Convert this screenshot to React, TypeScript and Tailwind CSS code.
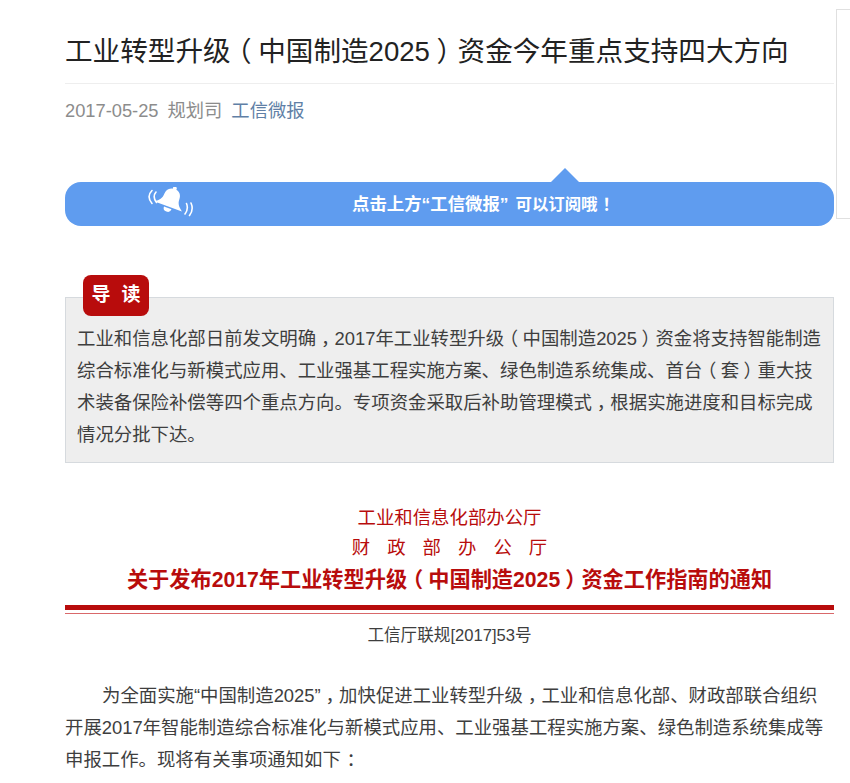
const font = "font-['Liberation_Sans','Noto_Sans_CJK_SC',sans-serif]";

const intro = [
  '工业和信息化部日前发文明确，2017年工业转型升级（中国制造2025）资金将支持智能制造',
  '综合标准化与新模式应用、工业强基工程实施方案、绿色制造系统集成、首台（套）重大技',
  '术装备保险补偿等四个重点方向。专项资金采取后补助管理模式，根据实施进度和目标完成',
  '情况分批下达。',
];

// the source font centres these marks in their em box, Noto pushes them to one side
const markClass: Record<string, string> = {
  '（': 'inline-block -translate-x-[0.24em]',
  '）': 'inline-block translate-x-[0.24em]',
  '，': 'inline-block translate-x-[0.26em]',
  '：': 'inline-block translate-x-[0.3em]',
  '！': 'inline-block translate-x-[0.3em]',
};

function Marks({ text }: { text: string }) {
  return (
    <>
      {text.split(/([（），：！])/).map((part, i) =>
        markClass[part] ? (
          <span key={i} className={markClass[part]}>
            {part}
          </span>
        ) : (
          part
        ),
      )}
    </>
  );
}

function Bell() {
  return (
    <svg width="46" height="34" viewBox="0 0 46 34" fill="none" className="shrink-0">
      <g transform="translate(2.500 -1.500) rotate(20 22 12)">
        <circle cx="22" cy="2.500" r="2" fill="#fff" />
        <path d="M22 3c-5.500 0-8 3.500-8 8 0 5-2.500 7.500-6.500 10.500h29c-4-3-6.500-5.500-6.500-10.500 0-4.500-2.500-8-8-8z" fill="#fff" />
        <path d="M18 23a4 4 0 0 0 8 0z" fill="#fff" />
      </g>
      <path d="M9 5c-2.500 3-2.500 6.500.5 10.500M5 3.500C1 7.500 1.300 12 5 16.500" stroke="#fff" strokeWidth="1.600" strokeLinecap="round" />
      <path d="M39.500 16.500c1.500 3.500 1 7-1.500 10.500M44 16c2 4.500 1.500 8.500-1.500 12.500" stroke="#fff" strokeWidth="1.600" strokeLinecap="round" />
    </svg>
  );
}

export default function App() {
  return (
    <div className={`${font} flex h-[783px] w-[850px] overflow-hidden bg-white`}>
      {/* Article column */}
      <div className="ml-[65px] w-[769px] shrink-0">
        <h1 className="mt-[31px] border-b border-[#eeeeee] pb-[11px] text-[27.600px] leading-[41px] whitespace-nowrap text-[#222222]">
          <Marks text="工业转型升级（中国制造2025）资金今年重点支持四大方向" />
        </h1>
        <div className="mt-[13px] flex h-[28px] items-center gap-[9px] text-[18.300px] whitespace-nowrap text-[#8c8c8c]">
          <span>2017-05-25</span>
          <span>规划司</span>
          <span className="text-[#607fa6]">工信微报</span>
        </div>

        {/* Subscribe banner */}
        <div className="relative mt-[57px] flex h-[44px] items-center rounded-[16px] bg-[#5f9cef] pl-[82px]">
          <div className="absolute -top-[14px] left-[486px] h-0 w-0 border-x-[14px] border-b-[14px] border-x-transparent border-b-[#5f9cef]" />
          <Bell />
          <span className="ml-[159px] text-[17.400px] font-bold whitespace-nowrap text-white">
            点击上方“工信微报”
            <span className="ml-[7px] text-[16.400px]">
              <Marks text="可以订阅哦！" />
            </span>
          </span>
        </div>

        {/* Intro box */}
        <div className="relative mt-[71px] h-[166px] border border-[#d6dade] bg-[#eeeeee] pt-[25px] pl-[11px]">
          <div className="absolute -top-[23px] left-[17px] flex h-[41px] w-[66px] items-center justify-center rounded-[8px] bg-[#b80c0c] text-[19px] font-bold tracking-[11px] whitespace-nowrap text-white">
            <span className="ml-[11px]">导读</span>
          </div>
          {intro.map((line) => (
            <p key={line} className="text-[18.400px] leading-[32px] whitespace-nowrap text-[#3e3e3e]">
              <Marks text={line} />
            </p>
          ))}
        </div>

        {/* Red heading */}
        <div className="mt-[40px] text-center text-[#b80c0c]">
          <p className="text-[18.400px] leading-[30px]">工业和信息化部办公厅</p>
          <p className="pl-[17px] text-[18.400px] leading-[30px] tracking-[17px]">财政部办公厅</p>
          <p className="mt-[2px] text-[21.200px] leading-[30px] font-bold">
            <Marks text="关于发布2017年工业转型升级（中国制造2025）资金工作指南的通知" />
          </p>
        </div>
        <div className="mt-[10px] h-[5px] bg-[#b80c0c]" />
        <div className="mt-[3px] h-px bg-[#d9686a]" />
        <p className="mt-[10px] text-center text-[16.600px] leading-[24px] text-[#3e3e3e]">工信厅联规[2017]53号</p>

        {/* Body */}
        <div className="mt-[32px] text-[18.400px] leading-[32px] whitespace-nowrap text-[#3e3e3e]">
          <p className="pl-[37px]">
            <Marks text="为全面实施“中国制造2025”，加快促进工业转型升级，工业和信息化部、财政部联合组织" />
          </p>
          <p>开展2017年智能制造综合标准化与新模式应用、工业强基工程实施方案、绿色制造系统集成等</p>
          <p>
            <Marks text="申报工作。现将有关事项通知如下：" />
          </p>
        </div>
      </div>

      {/* Sidebar edge */}
      <div className="mt-[9px] ml-[2px] h-[210px] w-[20px] shrink-0 border border-[#e0e0e0] bg-white" />
    </div>
  );
}
